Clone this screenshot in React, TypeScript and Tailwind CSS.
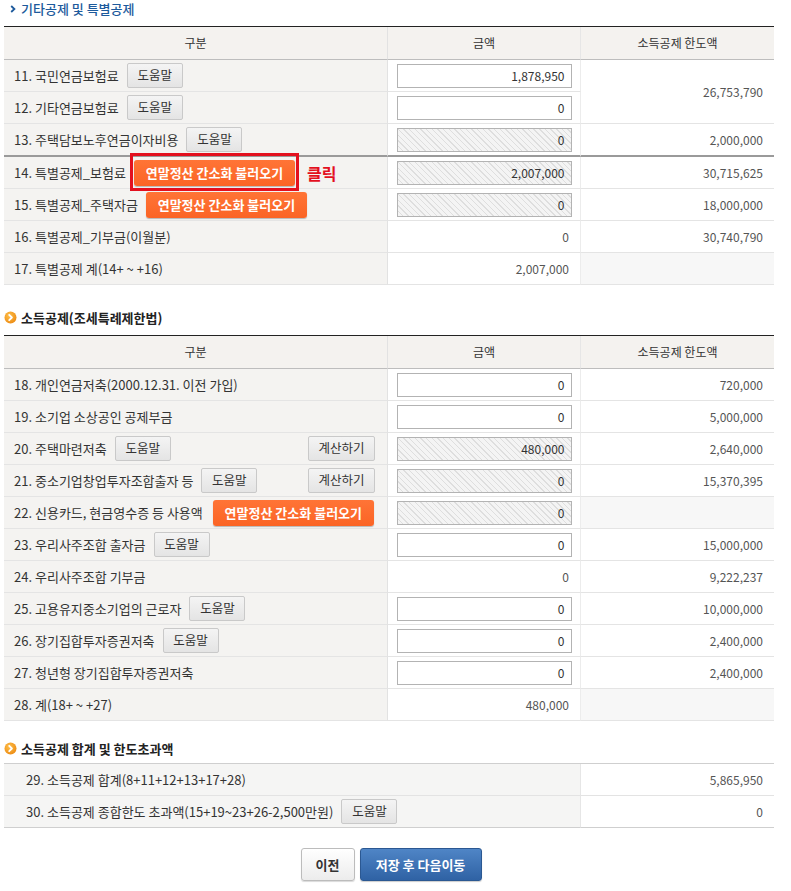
import React from "react";

const FONT = "font-['Noto_Sans_CJK_KR','Noto_Sans',sans-serif]";

function HelpBtn() {
  return (
    <button className="h-[25px] w-[56px] shrink-0 rounded-[2px] border border-[#c9c9c9] bg-[linear-gradient(#f4f4f4,#e4e4e4)] text-[12.5px] leading-none text-[#333]">
      도움말
    </button>
  );
}

function CalcBtn() {
  return (
    <button className="h-[25px] w-[67px] shrink-0 rounded-[2px] border border-[#c9c9c9] bg-[linear-gradient(#f4f4f4,#e4e4e4)] text-[12.5px] leading-none text-[#333]">
      계산하기
    </button>
  );
}

function OrangeBtn() {
  return (
    <button className="h-[26px] w-[161px] shrink-0 rounded-[3px] bg-[linear-gradient(#ff7436,#fb6425)] text-[13px] font-bold leading-none text-white shadow-[0_1px_1px_rgba(0,0,0,0.25)]">
      연말정산 간소화 불러오기
    </button>
  );
}

function Input({ v, ro }: { v: string; ro?: boolean }) {
  return (
    <input
      type="text"
      readOnly
      defaultValue={v}
      className={
        "h-[24px] w-[175px] border border-[#b3b3b3] pr-[6px] text-right text-[12px] text-[#333] outline-none " +
        (ro
          ? "bg-[repeating-linear-gradient(45deg,#f4f4f4_0px,#f4f4f4_3px,#dedede_3px,#dedede_4px)]"
          : "bg-white")
      }
    />
  );
}

type Row = {
  label: string;
  extra?: React.ReactNode;
  right?: React.ReactNode;
  amount: { kind: "input" | "ro" | "text"; v: string };
  limit?: string | null;
  limitSpan?: boolean;
  thick?: boolean;
};

function LabelCell({ r }: { r: Row }) {
  const b = r.thick ? "border-b-2 border-b-[#9a9a9a] h-[33px]" : "border-b border-b-[#e4e4e4] h-[32px]";
  return (
    <div className={"flex items-center justify-between border-r border-r-[#e2e2e2] bg-[#f4f3f1] pl-[10px] pr-[12px] " + b}>
      <div className="flex items-center gap-[8px]">
        <span className="whitespace-nowrap text-[13px] text-[#333]">{r.label}</span>
        {r.extra}
      </div>
      {r.right}
    </div>
  );
}

function AmountCell({ r }: { r: Row }) {
  const b = r.thick ? "border-b-2 border-b-[#9a9a9a] h-[33px]" : "border-b border-b-[#e4e4e4] h-[32px]";
  if (r.amount.kind === "text") {
    return (
      <div className={"flex items-center justify-end border-r border-r-[#ececec] pr-[11px] text-[12px] text-[#555] " + b}>
        {r.amount.v}
      </div>
    );
  }
  return (
    <div className={"flex items-center justify-center border-r border-r-[#ececec] " + b}>
      <Input v={r.amount.v} ro={r.amount.kind === "ro"} />
    </div>
  );
}

function LimitCell({ r }: { r: Row }) {
  const b = r.thick ? "border-b-2 border-b-[#9a9a9a] h-[33px]" : "border-b border-b-[#e4e4e4] h-[32px]";
  if (r.limitSpan) {
    return (
      <div className="row-span-2 flex items-center justify-end border-b border-b-[#e4e4e4] pr-[11px] text-[12px] text-[#555]">
        {r.limit}
      </div>
    );
  }
  if (r.limit === null) {
    return <div className={"bg-[#f7f7f7] " + b} />;
  }
  return (
    <div className={"flex items-center justify-end pr-[11px] text-[12px] text-[#555] " + b}>
      {r.limit}
    </div>
  );
}

function Table({ rows }: { rows: Row[] }) {
  return (
    <div className="grid grid-cols-[384px_193px_193px] border-t border-t-[#222]">
      <div className="flex h-[33px] items-center justify-center border-b border-r border-b-[#bdbdbd] border-r-[#e2e2e2] bg-[#f4f2ef] text-[12px] text-[#333]">
        구분
      </div>
      <div className="flex h-[33px] items-center justify-center border-b border-r border-b-[#bdbdbd] border-r-[#e6e6e6] bg-[#f4f2ef] text-[12px] text-[#333]">
        금액
      </div>
      <div className="flex h-[33px] items-center justify-center border-b border-b-[#bdbdbd] bg-[#f4f2ef] text-[12px] text-[#333]">
        소득공제 한도액
      </div>
      {rows.map((r, i) => (
        <React.Fragment key={i}>
          <LabelCell r={r} />
          <AmountCell r={r} />
          {r.limit !== undefined || r.limitSpan ? <LimitCell r={r} /> : null}
        </React.Fragment>
      ))}
    </div>
  );
}

function OrangeDot() {
  return (
    <svg width="13" height="13" viewBox="0 0 13 13" className="shrink-0">
      <defs>
        <radialGradient id="og" cx="40%" cy="35%" r="70%">
          <stop offset="0%" stopColor="#ffc04a" />
          <stop offset="100%" stopColor="#ec8a12" />
        </radialGradient>
      </defs>
      <circle cx="6.5" cy="6.5" r="6" fill="url(#og)" />
      <path d="M5.2 3.8 L7.9 6.5 L5.2 9.2" fill="none" stroke="#fff" strokeWidth="1.8" strokeLinecap="round" strokeLinejoin="round" />
    </svg>
  );
}

export default function App() {
  const rows1: Row[] = [
    { label: "11. 국민연금보험료", extra: <HelpBtn />, amount: { kind: "input", v: "1,878,950" }, limit: "26,753,790", limitSpan: true },
    { label: "12. 기타연금보험료", extra: <HelpBtn />, amount: { kind: "input", v: "0" } },
    { label: "13. 주택담보노후연금이자비용", extra: <HelpBtn />, amount: { kind: "ro", v: "0" }, limit: "2,000,000", thick: true },
    {
      label: "14. 특별공제_보험료",
      extra: (
        <div className="flex items-center">
          <div className="relative">
            <OrangeBtn />
            <span className="pointer-events-none absolute left-[-4px] top-[-6px] h-[38px] w-[169px] border-[3px] border-[#e3101e]" />
          </div>
          <span className="ml-[12px] text-[16px] font-bold text-[#e3101e]">클릭</span>
        </div>
      ),
      amount: { kind: "ro", v: "2,007,000" },
      limit: "30,715,625",
    },
    { label: "15. 특별공제_주택자금", extra: <OrangeBtn />, amount: { kind: "ro", v: "0" }, limit: "18,000,000" },
    { label: "16. 특별공제_기부금(이월분)", amount: { kind: "text", v: "0" }, limit: "30,740,790" },
    { label: "17. 특별공제 계(14+ ~ +16)", amount: { kind: "text", v: "2,007,000" }, limit: null },
  ];

  const rows2: Row[] = [
    { label: "18. 개인연금저축(2000.12.31. 이전 가입)", amount: { kind: "input", v: "0" }, limit: "720,000" },
    { label: "19. 소기업 소상공인 공제부금", amount: { kind: "input", v: "0" }, limit: "5,000,000" },
    { label: "20. 주택마련저축", extra: <HelpBtn />, right: <CalcBtn />, amount: { kind: "ro", v: "480,000" }, limit: "2,640,000" },
    { label: "21. 중소기업창업투자조합출자 등", extra: <HelpBtn />, right: <CalcBtn />, amount: { kind: "ro", v: "0" }, limit: "15,370,395" },
    { label: "22. 신용카드, 현금영수증 등 사용액", extra: <div className="ml-[2px]"><OrangeBtn /></div>, amount: { kind: "ro", v: "0" }, limit: null },
    { label: "23. 우리사주조합 출자금", extra: <HelpBtn />, amount: { kind: "input", v: "0" }, limit: "15,000,000" },
    { label: "24. 우리사주조합 기부금", amount: { kind: "text", v: "0" }, limit: "9,222,237" },
    { label: "25. 고용유지중소기업의 근로자", extra: <HelpBtn />, amount: { kind: "input", v: "0" }, limit: "10,000,000" },
    { label: "26. 장기집합투자증권저축", extra: <HelpBtn />, amount: { kind: "input", v: "0" }, limit: "2,400,000" },
    { label: "27. 청년형 장기집합투자증권저축", amount: { kind: "input", v: "0" }, limit: "2,400,000" },
    { label: "28. 계(18+ ~ +27)", amount: { kind: "text", v: "480,000" }, limit: null },
  ];

  return (
    <div className={"min-h-[891px] w-[791px] bg-white " + FONT}>
      <div className="w-[774px] pl-[4px]">
        <div className="flex h-[26px] items-start">
          <div className="flex h-[17px] items-center gap-[5px] pl-[6px]">
            <svg width="6" height="8" viewBox="0 0 6 8">
              <path d="M1.2 1 L4.4 4 L1.2 7" fill="none" stroke="#1d5a9c" strokeWidth="1.8" />
            </svg>
            <span className="text-[13px] font-medium leading-[17px] text-[#1d5a9c]">기타공제 및 특별공제</span>
          </div>
        </div>
        <Table rows={rows1} />

        <div className="flex items-center gap-[4px] pb-[9px] pt-[24px]">
          <OrangeDot />
          <span className="text-[13px] font-bold leading-[17px] text-[#222]">소득공제(조세특례제한법)</span>
        </div>
        <Table rows={rows2} />

        <div className="flex items-center gap-[4px] pb-[6px] pt-[19px]">
          <OrangeDot />
          <span className="text-[13px] font-bold leading-[17px] text-[#222]">소득공제 합계 및 한도초과액</span>
        </div>
        <div className="grid grid-cols-[577px_193px] border-t border-t-[#cfcfcf]">
          <div className="flex h-[32px] items-center border-b border-r border-b-[#e3e3e3] border-r-[#e6e6e6] bg-[#f5f5f4] pl-[22px] text-[13px] text-[#333]">
            29. 소득공제 합계(8+11+12+13+17+28)
          </div>
          <div className="flex h-[32px] items-center justify-end border-b border-b-[#e3e3e3] pr-[11px] text-[12px] text-[#555]">
            5,865,950
          </div>
          <div className="flex h-[32px] items-center gap-[8px] border-b border-r border-b-[#cfcfcf] border-r-[#e6e6e6] bg-[#f5f5f4] pl-[22px] text-[13px] text-[#333]">
            <span>30. 소득공제 종합한도 초과액(15+19~23+26-2,500만원)</span>
            <HelpBtn />
          </div>
          <div className="flex h-[32px] items-center justify-end border-b border-b-[#cfcfcf] pr-[11px] text-[12px] text-[#555]">
            0
          </div>
        </div>

        <div className="mt-[20px] flex justify-center gap-[5px] pl-[4px]">
          <button className="h-[33px] w-[54px] rounded-[3px] border border-[#bcbcbc] bg-[linear-gradient(#ffffff,#ececec)] text-[13px] font-bold text-[#333] shadow-[0_1px_1px_rgba(0,0,0,0.15)]">
            이전
          </button>
          <button className="h-[33px] w-[122px] rounded-[3px] border border-[#2b5892] bg-[linear-gradient(#4f85c6,#2f62a4)] text-[13px] font-bold text-white shadow-[0_1px_1px_rgba(0,0,0,0.2)]">
            저장 후 다음이동
          </button>
        </div>
      </div>
    </div>
  );
}
